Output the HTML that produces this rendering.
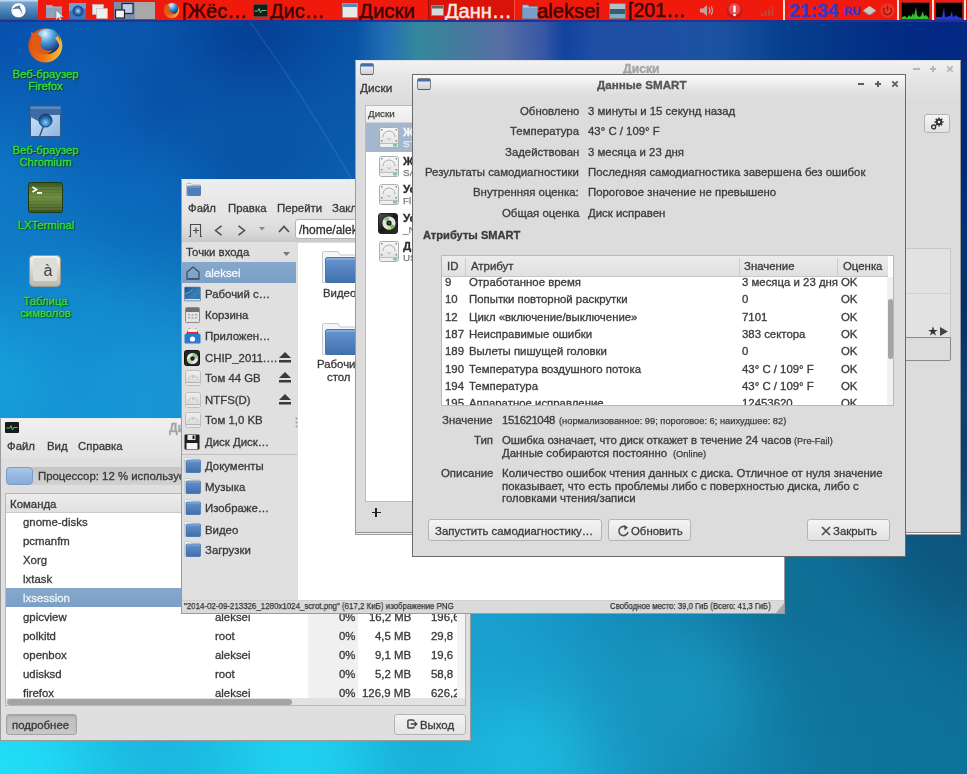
<!DOCTYPE html>
<html><head><meta charset="utf-8">
<style>
*{box-sizing:border-box;margin:0;padding:0}
html,body{width:967px;height:774px;overflow:hidden}
body{position:relative;font-family:"Liberation Sans",sans-serif;font-size:11.4px;color:#3c3c3c;background:#1080c8}
.a{position:absolute}
.w{position:absolute;background:#dcdcdc;overflow:hidden}
.bd{position:absolute;left:0;top:0;right:0;bottom:0;border:1px solid #7a7a7a;pointer-events:none}
.t{position:absolute;white-space:pre;line-height:11.4px;font-size:11.4px;-webkit-text-stroke:0.32px currentColor;will-change:transform}
.s{position:absolute;white-space:pre;line-height:9.3px;font-size:9.3px;-webkit-text-stroke:0.25px currentColor;will-change:transform}
.r{text-align:right}
.b{font-weight:bold}
.btn{position:absolute;border:1px solid #b4b4b4;border-radius:3px;background:linear-gradient(#f4f4f4,#e2e2e2)}
</style></head><body>

<div class="a" style="left:0;top:0;width:967px;height:774px;overflow:hidden"><div class="a" style="left:-60px;top:-60px;width:1087px;height:894px;filter:blur(14px)">
<i style="position:absolute;left:0;top:-4px;width:1087px;height:32px;background:linear-gradient(90deg,#0a5eb3 -20px,#0a5ab1 20px,#0958b0 60px,#0959b0 100px,#095aaf 140px,#0959ad 180px,#0956a9 220px,#0851a5 260px,#074da1 300px,#074da0 340px,#0850a3 380px,#0953a5 420px,#0955a5 460px,#0a54a4 500px,#0a50a2 540px,#0a4b9f 580px,#0a469c 620px,#0a439b 660px,#0a449a 700px,#094599 740px,#094597 780px,#084394 820px,#073f90 860px,#053a8c 900px,#043488 940px,#033086 980px,#033086 1020px,#043286 1060px,#043687 1100px)"></i>
<i style="position:absolute;left:0;top:28px;width:1087px;height:32px;background:linear-gradient(90deg,#0a5db3 -20px,#0957b1 20px,#0854af 60px,#0956b0 100px,#0959af 140px,#0958ad 180px,#0854a9 220px,#074da1 260px,#05469b 300px,#06479c 340px,#074da0 380px,#0852a4 420px,#0954a5 460px,#0a53a4 500px,#0a4fa2 540px,#0a489e 580px,#0a419b 620px,#0a3e99 660px,#0a4099 700px,#094399 740px,#094497 780px,#084293 820px,#073e8e 860px,#05378a 900px,#033086 940px,#022b84 980px,#022b84 1020px,#032f85 1060px,#043386 1100px)"></i>
<i style="position:absolute;left:0;top:60px;width:1087px;height:32px;background:linear-gradient(90deg,#0a5cb3 -20px,#0955b0 20px,#0850ae 60px,#0854af 100px,#0959b0 140px,#0958ae 180px,#0854a9 220px,#064a9f 260px,#043f95 300px,#054298 340px,#074c9f 380px,#0852a4 420px,#0955a6 460px,#0a53a5 500px,#0a4ea1 540px,#0a469d 580px,#0a3e99 620px,#0a3a98 660px,#0a3d98 700px,#0a4198 740px,#094496 780px,#084292 820px,#063d8d 860px,#053588 900px,#032e85 940px,#022884 980px,#022884 1020px,#032d84 1060px,#043284 1100px)"></i>
<i style="position:absolute;left:0;top:92px;width:1087px;height:32px;background:linear-gradient(90deg,#0a5eb4 -20px,#0957b1 20px,#0851ae 60px,#0855b0 100px,#095ab1 140px,#0958ae 180px,#0854aa 220px,#074da2 260px,#044096 300px,#054499 340px,#074da1 380px,#0853a5 420px,#0956a6 460px,#0a54a5 500px,#0a4fa2 540px,#0a469d 580px,#0a3d99 620px,#0a3a98 660px,#0a3c98 700px,#0a4198 740px,#094496 780px,#084292 820px,#063d8c 860px,#053588 900px,#032e84 940px,#022983 980px,#022983 1020px,#032d83 1060px,#043183 1100px)"></i>
<i style="position:absolute;left:0;top:124px;width:1087px;height:32px;background:linear-gradient(90deg,#0b63b7 -20px,#0a5eb4 20px,#095ab2 60px,#0a5cb3 100px,#0a5db3 140px,#0958af 180px,#0851a9 220px,#0852a7 260px,#074ca1 300px,#074da1 340px,#0852a4 380px,#0956a7 420px,#0a58a8 460px,#0a56a6 500px,#0a51a3 540px,#0a499e 580px,#0a409a 620px,#0a3d99 660px,#0a3f99 700px,#0a4398 740px,#094596 780px,#084391 820px,#073e8c 860px,#053787 900px,#033083 940px,#022c82 980px,#022b80 1020px,#032d80 1060px,#043181 1100px)"></i>
<i style="position:absolute;left:0;top:156px;width:1087px;height:32px;background:linear-gradient(90deg,#0c69bb -20px,#0c67ba 20px,#0b65b9 60px,#0b62b7 100px,#0a5eb5 140px,#095bb2 180px,#0851a8 220px,#0855aa 260px,#0854a7 300px,#0854a7 340px,#0956a8 380px,#0958a9 420px,#0a5aa9 460px,#0b59a8 500px,#0b55a5 540px,#0b4ea1 580px,#0a479d 620px,#0a439b 660px,#0a449a 700px,#0a4799 740px,#094795 780px,#084491 820px,#073f8b 860px,#053886 900px,#043181 940px,#032c7d 980px,#022a7a 1020px,#032c7c 1060px,#04317e 1100px)"></i>
<i style="position:absolute;left:0;top:188px;width:1087px;height:32px;background:linear-gradient(90deg,#0d6fbe -20px,#0d6fbf 20px,#0d6fbf 60px,#0c69bb 100px,#0a60b6 140px,#0a5fb5 180px,#095bb0 220px,#0959ac 260px,#0853a7 300px,#0854a7 340px,#0958aa 380px,#0a5bab 420px,#0b5dab 460px,#0b5caa 500px,#0b59a7 540px,#0b53a3 580px,#0b4ea0 620px,#0b4b9d 660px,#0a4a9b 700px,#0a4b99 740px,#094a95 780px,#084690 820px,#07418a 860px,#063a85 900px,#04327f 940px,#022b7a 980px,#022878 1020px,#022b79 1060px,#04317d 1100px)"></i>
<i style="position:absolute;left:0;top:220px;width:1087px;height:32px;background:linear-gradient(90deg,#0e73c1 -20px,#0f75c3 20px,#0f77c6 60px,#0e71c1 100px,#0b67ba 140px,#0a66b9 180px,#0a66b8 220px,#095db0 260px,#0853a7 300px,#0855a8 340px,#0a5bac 380px,#0b5ead 420px,#0b60ad 460px,#0c5fac 500px,#0c5da9 540px,#0c59a6 580px,#0b55a2 620px,#0b529f 660px,#0b509d 700px,#0a4f99 740px,#0a4d95 780px,#094890 820px,#08438a 860px,#063c84 900px,#05347e 940px,#032d7a 980px,#022978 1020px,#032c79 1060px,#04327c 1100px)"></i>
<i style="position:absolute;left:0;top:252px;width:1087px;height:32px;background:linear-gradient(90deg,#0f77c3 -20px,#0f78c5 20px,#0f79c7 60px,#0f76c4 100px,#0c6ebe 140px,#0a6abb 180px,#0a69bb 220px,#0a64b5 260px,#095cae 300px,#0a5cad 340px,#0b5faf 380px,#0b62b0 420px,#0c63af 460px,#0c63ae 500px,#0c61ab 540px,#0c5ea8 580px,#0c5ba5 620px,#0c58a1 660px,#0b559e 700px,#0b539a 740px,#0a5095 780px,#094b90 820px,#084589 860px,#073e83 900px,#05387e 940px,#04327a 980px,#042f78 1020px,#043179 1060px,#05357b 1100px)"></i>
<i style="position:absolute;left:0;top:284px;width:1087px;height:32px;background:linear-gradient(90deg,#107bc5 -20px,#107ac6 20px,#0f7ac6 60px,#0f79c5 100px,#0e76c2 140px,#0c70be 180px,#0c6dbc 220px,#0c6bb9 260px,#0c67b5 300px,#0c65b3 340px,#0c66b3 380px,#0c67b3 420px,#0d67b2 460px,#0d67b0 500px,#0d65ad 540px,#0d63aa 580px,#0d60a7 620px,#0c5da3 660px,#0c5a9f 700px,#0b579b 740px,#0b5396 780px,#0a4e90 820px,#094889 860px,#084182 900px,#063a7c 940px,#063576 980px,#053373 1020px,#053475 1060px,#063778 1100px)"></i>
<i style="position:absolute;left:0;top:316px;width:1087px;height:32px;background:linear-gradient(90deg,#117fc8 -20px,#1180c9 20px,#1180c9 60px,#1181c9 100px,#1081c9 140px,#0f7cc6 180px,#0f78c2 220px,#0f74bf 260px,#0e70bc 300px,#0e6db9 340px,#0d6cb7 380px,#0e6cb6 420px,#0e6cb4 460px,#0e6bb2 500px,#0e69af 540px,#0e67ac 580px,#0d65a8 620px,#0d62a5 660px,#0d5ea0 700px,#0c5b9c 740px,#0b5696 780px,#0a5190 820px,#094a89 860px,#084382 900px,#073c79 940px,#063571 980px,#06316c 1020px,#063470 1060px,#073976 1100px)"></i>
<i style="position:absolute;left:0;top:348px;width:1087px;height:32px;background:linear-gradient(90deg,#1285cb -20px,#1288cd 20px,#138ace 60px,#128ace 100px,#128cd0 140px,#1288cd 180px,#1384ca 220px,#127fc6 260px,#107ac2 300px,#0f75be 340px,#0f73bb 380px,#0f71b9 420px,#0f70b6 460px,#0f6fb4 500px,#0f6eb1 540px,#0e6cae 580px,#0e69aa 620px,#0e66a6 660px,#0d62a2 700px,#0d5e9d 740px,#0c5a97 780px,#0b5491 820px,#0a4e8a 860px,#094682 900px,#083d79 940px,#06346f 980px,#06306a 1020px,#06336e 1060px,#073a75 1100px)"></i>
<i style="position:absolute;left:0;top:380px;width:1087px;height:32px;background:linear-gradient(90deg,#138bce -20px,#1491d2 20px,#1595d5 60px,#1390d2 100px,#128ed1 140px,#148ed1 180px,#168ed1 220px,#1589cc 260px,#1382c7 300px,#117cc2 340px,#1079be 380px,#1076bb 420px,#1075b9 460px,#1074b6 500px,#1072b3 540px,#0f70b0 580px,#0f6dac 620px,#0f6aa8 660px,#0e66a3 700px,#0d629e 740px,#0d5d98 780px,#0c5892 820px,#0b518b 860px,#0a4a83 900px,#08417a 940px,#073972 980px,#06346d 1020px,#073771 1060px,#083d76 1100px)"></i>
<i style="position:absolute;left:0;top:412px;width:1087px;height:32px;background:linear-gradient(90deg,#1490d1 -20px,#1698d7 20px,#179fdb 60px,#1596d5 100px,#1491d3 140px,#1794d5 180px,#1a95d5 220px,#178fd0 260px,#1487ca 300px,#1281c5 340px,#117dc1 380px,#117bbe 420px,#1179bb 460px,#1178b8 500px,#1076b5 540px,#1074b2 580px,#1072ae 620px,#0f6eaa 660px,#0f6aa5 700px,#0e669f 740px,#0d6199 780px,#0c5c93 820px,#0b558c 860px,#0a4e84 900px,#09477d 940px,#094077 980px,#083d74 1020px,#083f75 1060px,#094279 1100px)"></i>
<i style="position:absolute;left:0;top:444px;width:1087px;height:32px;background:linear-gradient(90deg,#1591d2 -20px,#1698d7 20px,#179eda 60px,#1697d6 100px,#1594d5 140px,#1698d7 180px,#1995d5 220px,#1790d1 260px,#158acc 300px,#1385c7 340px,#1281c3 380px,#127fc0 420px,#127ebd 460px,#127dbb 500px,#117bb8 540px,#1179b4 580px,#1176b0 620px,#1073ab 660px,#0f6fa6 700px,#0f6aa1 740px,#0e659b 780px,#0d6094 820px,#0c598e 860px,#0b5286 900px,#0a4b7e 940px,#0a4578 980px,#094274 1020px,#094376 1060px,#0a467a 1100px)"></i>
<i style="position:absolute;left:0;top:476px;width:1087px;height:32px;background:linear-gradient(90deg,#1591d1 -20px,#1596d5 20px,#1698d6 60px,#1595d4 100px,#1694d4 140px,#1696d5 180px,#1794d4 220px,#1690d1 260px,#158bcc 300px,#1488c8 340px,#1385c5 380px,#1384c2 420px,#1383bf 460px,#1382bd 500px,#1280ba 540px,#127eb7 580px,#127bb3 620px,#1177ae 660px,#1073a8 700px,#0f6ea2 740px,#0f699c 780px,#0e6496 820px,#0d5e8f 860px,#0c5688 900px,#0b4e7f 940px,#0a4576 980px,#0a4071 1020px,#0a4374 1060px,#0a487a 1100px)"></i>
<i style="position:absolute;left:0;top:508px;width:1087px;height:32px;background:linear-gradient(90deg,#1491d0 -20px,#1593d2 20px,#1594d3 60px,#1593d3 100px,#1593d3 140px,#1693d3 180px,#1692d2 220px,#168fcf 260px,#158dcc 300px,#148ac9 340px,#1489c6 380px,#1488c4 420px,#1488c2 460px,#1487c0 500px,#1486be 540px,#1384ba 580px,#1380b5 620px,#127cb0 660px,#1177aa 700px,#1072a4 740px,#0f6d9e 780px,#0f6898 820px,#0e6292 860px,#0d5b8a 900px,#0c5281 940px,#0a4777 980px,#0a4070 1020px,#0a4575 1060px,#0b4b7b 1100px)"></i>
<i style="position:absolute;left:0;top:540px;width:1087px;height:32px;background:linear-gradient(90deg,#1591d0 -20px,#1592d1 20px,#1593d2 60px,#1593d2 100px,#1592d2 140px,#1592d1 180px,#1691d0 220px,#1590cf 260px,#158ecc 300px,#158dca 340px,#148cc8 380px,#158dc6 420px,#158dc5 460px,#158dc3 500px,#158cc1 540px,#158abe 580px,#1485b9 620px,#1380b3 660px,#127bac 700px,#1176a6 740px,#10719f 780px,#0f6c99 820px,#0e6794 860px,#0e608d 900px,#0d5885 940px,#0c507d 980px,#0b4b79 1020px,#0b4c7a 1060px,#0c507e 1100px)"></i>
<i style="position:absolute;left:0;top:572px;width:1087px;height:32px;background:linear-gradient(90deg,#1593d0 -20px,#1594d1 20px,#1594d1 60px,#1594d1 100px,#1593d1 140px,#1593d1 180px,#1592d0 220px,#1591ce 260px,#1591cd 300px,#1591cb 340px,#1591c9 380px,#1691c8 420px,#1693c7 460px,#1694c7 500px,#1793c6 540px,#1690c2 580px,#158bbc 620px,#1485b6 660px,#137fae 700px,#1279a7 740px,#1174a0 780px,#106f9a 820px,#0f6c96 860px,#0e6691 900px,#0d5d89 940px,#0d5681 980px,#0d557e 1020px,#0d547f 1060px,#0c5481 1100px)"></i>
<i style="position:absolute;left:0;top:604px;width:1087px;height:32px;background:linear-gradient(90deg,#1596d1 -20px,#1697d2 20px,#1697d2 60px,#1697d2 100px,#1696d2 140px,#1695d1 180px,#1695d0 220px,#1695cf 260px,#1695ce 300px,#1696cd 340px,#1696cc 380px,#1796cb 420px,#1798ca 460px,#189acb 500px,#189acb 540px,#1796c7 580px,#1690c0 620px,#1589b8 660px,#1383b1 700px,#127daa 740px,#1177a1 780px,#10719a 820px,#0f6f96 860px,#0f6b94 900px,#0e628c 940px,#0d5881 980px,#0d567e 1020px,#0d5781 1060px,#0d5884 1100px)"></i>
<i style="position:absolute;left:0;top:636px;width:1087px;height:32px;background:linear-gradient(90deg,#169cd4 -20px,#179ed5 20px,#179ed5 60px,#179dd4 100px,#179bd3 140px,#169ad2 180px,#1699d2 220px,#179ad1 260px,#179bd1 300px,#179cd0 340px,#179ccf 380px,#179bcd 420px,#189ccd 460px,#199ece 500px,#199ece 540px,#189bcb 580px,#1794c3 620px,#158dbb 660px,#1487b4 700px,#1382ad 740px,#127aa4 780px,#10729a 820px,#107096 860px,#0f6e96 900px,#0e6890 940px,#0e5e87 980px,#0e5982 1020px,#0d5a84 1060px,#0d5c87 1100px)"></i>
<i style="position:absolute;left:0;top:668px;width:1087px;height:32px;background:linear-gradient(90deg,#18a4d8 -20px,#18a7d9 20px,#18a8da 60px,#18a6d9 100px,#18a3d7 140px,#17a0d5 180px,#179fd4 220px,#18a0d4 260px,#18a2d4 300px,#18a4d4 340px,#18a3d3 380px,#18a1d0 420px,#199fcf 460px,#199fcf 500px,#199fcf 540px,#199dcd 580px,#1797c6 620px,#1691be 660px,#158cb8 700px,#1589b4 740px,#1381ab 780px,#10759d 820px,#107097 860px,#0f7097 900px,#0f6d95 940px,#0e668f 980px,#0e618a 1020px,#0e608a 1060px,#0d608b 1100px)"></i>
<i style="position:absolute;left:0;top:700px;width:1087px;height:32px;background:linear-gradient(90deg,#19aedd -20px,#1ab4e0 20px,#1bb6e1 60px,#1ab3df 100px,#19addc 140px,#19a8d9 180px,#18a6d7 220px,#19a8d8 260px,#19acda 300px,#1aafdb 340px,#1aaed9 380px,#19a8d5 420px,#19a2d1 460px,#19a0cf 500px,#19a0cf 540px,#199fcd 580px,#189bc8 620px,#1794c0 660px,#1691bb 700px,#1791bb 740px,#158bb5 780px,#127ba4 820px,#10749b 860px,#0f7399 900px,#0f7198 940px,#0e6d95 980px,#0e6992 1020px,#0e6790 1060px,#0e6590 1100px)"></i>
<i style="position:absolute;left:0;top:732px;width:1087px;height:32px;background:linear-gradient(90deg,#1bb9e2 -20px,#1dc2e7 20px,#1dc6ea 60px,#1dc2e7 100px,#1bb9e2 140px,#1ab0dd 180px,#19addb 220px,#1ab0dc 260px,#1bb7e0 300px,#1cbde3 340px,#1cbbe2 380px,#1bb2db 420px,#1aa8d4 460px,#1aa4d1 500px,#1aa5d1 540px,#1aa6d1 580px,#19a2cc 620px,#1798c3 660px,#1793bd 700px,#1795be 740px,#1791ba 780px,#1381a9 820px,#10769d 860px,#0f7399 900px,#0f7399 940px,#0e7198 980px,#0e6f96 1020px,#0e6c94 1060px,#0e6993 1100px)"></i>
<i style="position:absolute;left:0;top:764px;width:1087px;height:32px;background:linear-gradient(90deg,#1dc4e8 -20px,#1fd0ef 20px,#20d6f2 60px,#1fd1ef 100px,#1dc4e8 140px,#1bb8e1 180px,#1ab3de 220px,#1bb7e0 260px,#1dc1e6 300px,#1ecbec 340px,#1ecaeb 380px,#1cbce2 420px,#1baed8 460px,#1aaad5 500px,#1baed7 540px,#1cb3da 580px,#1bacd4 620px,#189dc7 660px,#1794be 700px,#1793bd 740px,#168fb9 780px,#1382ab 820px,#10789f 860px,#0f749a 900px,#0e7399 940px,#0e7398 980px,#0e7298 1020px,#0e6f97 1060px,#0e6c96 1100px)"></i>
<i style="position:absolute;left:0;top:796px;width:1087px;height:32px;background:linear-gradient(90deg,#1ecaeb -20px,#20d8f3 20px,#21def7 60px,#21daf4 100px,#1ecbec 140px,#1cbde3 180px,#1bb7e0 220px,#1cbbe2 260px,#1ec7e9 300px,#1fd2f0 340px,#1fd1f0 380px,#1dc3e6 420px,#1bb3db 460px,#1baed7 500px,#1cb5db 540px,#1dbadf 580px,#1cb3d9 620px,#19a1cb 660px,#1795bf 700px,#1690ba 740px,#158bb5 780px,#1382ab 820px,#1179a1 860px,#0f759c 900px,#0e739a 940px,#0e7399 980px,#0e7399 1020px,#0e7198 1060px,#0e6e97 1100px)"></i>
<i style="position:absolute;left:0;top:828px;width:1087px;height:32px;background:linear-gradient(90deg,#1eccec -20px,#20d9f4 20px,#21dff7 60px,#21dbf5 100px,#1ecded 140px,#1cbfe4 180px,#1bb9e0 220px,#1cbce2 260px,#1dc6e9 300px,#1fd0ef 340px,#1fcfef 380px,#1dc3e6 420px,#1bb4db 460px,#1bafd8 500px,#1cb4db 540px,#1db8de 580px,#1cb2d8 620px,#19a3cc 660px,#1796c0 700px,#158eb9 740px,#1488b2 780px,#1281ab 820px,#117aa3 860px,#10769e 900px,#0f749b 940px,#0e7399 980px,#0e7399 1020px,#0e7199 1060px,#0e6f99 1100px)"></i>
<i style="position:absolute;left:0;top:860px;width:1087px;height:32px;background:linear-gradient(90deg,#1ec9eb -20px,#20d4f1 20px,#20d9f4 60px,#20d5f2 100px,#1ecaeb 140px,#1cbee4 180px,#1bb8e0 220px,#1cbae1 260px,#1dc1e6 300px,#1ec8ea 340px,#1ec7e9 380px,#1cbde2 420px,#1bb2da 460px,#1baed6 500px,#1bb0d8 540px,#1cb1d8 580px,#1bacd4 620px,#19a0ca 660px,#1795c0 700px,#158eb8 740px,#1487b2 780px,#1281ab 820px,#117ba5 860px,#1077a0 900px,#0f759d 940px,#0e739b 980px,#0e739a 1020px,#0e719a 1060px,#0e709a 1100px)"></i>
<i style="position:absolute;left:0;top:892px;width:1087px;height:32px;background:linear-gradient(90deg,#1dc4e7 -20px,#1eccec 20px,#1fd0ee 60px,#1ecdec 100px,#1dc4e7 140px,#1cbbe2 180px,#1bb6df 220px,#1bb7df 260px,#1cbbe1 300px,#1cbfe3 340px,#1cbde2 380px,#1bb7dd 420px,#1aafd8 460px,#1aabd4 500px,#1aabd4 540px,#1aaad3 580px,#19a5ce 620px,#189dc7 660px,#1694bf 700px,#158db8 740px,#1487b1 780px,#1281ac 820px,#117ca6 860px,#1078a2 900px,#0f769f 940px,#0f749d 980px,#0f739c 1020px,#0f729b 1060px,#0f709b 1100px)"></i>
</div></div>
<div class="a" style="left:355px;top:20px;width:210px;height:42px;background:linear-gradient(90deg,rgba(60,120,190,0) 0%,rgba(70,140,200,0.45) 15%,rgba(80,170,150,0.6) 30%,rgba(110,160,150,0.55) 45%,rgba(150,140,170,0.55) 70%,rgba(120,120,180,0.4) 90%,rgba(40,60,150,0) 100%)"></div>
<div class="a" style="left:550px;top:20px;width:230px;height:42px;background:linear-gradient(90deg,rgba(120,160,220,0) 0%,rgba(120,160,220,0.2) 20%,rgba(120,160,220,0.16) 75%,rgba(120,160,220,0) 100%)"></div>
<svg class="a" style="left:0;top:0" width="967" height="774"><path d="M250 22Q300 90 352 180" fill="none" stroke="rgba(160,210,250,0.13)" stroke-width="1.5"/></svg>
<div class="a" style="left:0;top:20px;width:967px;height:2px;background:linear-gradient(#2a2a8a,#1a3a9a)"></div><div class="a" style="left:0;top:0;width:967px;height:20px;overflow:hidden">
<div class="a" style="left:0;top:0;width:967px;height:20px;background:#f01a0c"></div>
<div class="a" style="left:0;top:0;width:38px;height:20px;background:linear-gradient(#b8d8f4 0,#b8d8f4 1px,#7aa6d0 2px,#4a82b8 55%,#2a6498 95%,#5a3a78 100%)"></div>
<svg class="a" style="left:10px;top:2px" width="17" height="17" viewBox="0 0 17 17"><circle cx="8.5" cy="8.2" r="7.6" fill="#fafcff" stroke="#3a5a80" stroke-width="0.6"/><path d="M1.8 7.5Q5 4 9.5 3.2Q11.5 7.5 12.8 12.8Q10.8 8.5 9 6.8Q5 6.3 1.8 7.5Z" fill="#5a7896"/></svg>
<svg class="a" style="left:45px;top:3px" width="19" height="17" viewBox="0 0 19 17"><path d="M1 2h6l1.5 1.5H17V15H1Z" fill="#9ab0c8"/><rect x="1" y="5" width="16" height="10" fill="#8aa2bc"/><path d="M11 7L11 17 13.5 14.5 15.5 18.5 17 17.8 15 14 18.5 14Z" fill="#f0f0f0" stroke="#777" stroke-width="0.6"/></svg>
<svg class="a" style="left:69px;top:3px" width="17" height="16" viewBox="0 0 17 16"><rect x="0" y="0" width="17" height="16" rx="1" fill="#3e78bc"/><path d="M0 0H17V6Q8 3 0 9Z" fill="#6aa0d8"/><circle cx="9" cy="8" r="4.5" fill="none" stroke="#1e4e90" stroke-width="2"/><circle cx="9" cy="8" r="2" fill="#8ab8e8"/></svg>
<svg class="a" style="left:92px;top:4px" width="16" height="15" viewBox="0 0 16 15"><rect x="0.5" y="0.5" width="11" height="10" fill="#e8e8e8" stroke="#bbb" stroke-width="0.6"/><rect x="4.5" y="4.5" width="11" height="10" fill="#f0f0f0" stroke="#bbb" stroke-width="0.6"/></svg>
<div class="a" style="left:114px;top:2px;width:41px;height:17px;background:#a8a8a8"></div>
<svg class="a" style="left:114px;top:2px" width="21" height="17" viewBox="0 0 21 17"><rect x="0" y="0" width="21" height="17" fill="#7a90a8"/><rect x="8" y="1.5" width="11" height="10" fill="#b8d0e8" stroke="#222" stroke-width="1.2"/><rect x="1.5" y="8" width="9" height="8" fill="#f4f4f4" stroke="#222" stroke-width="1.2"/></svg>
<svg class="a" style="left:163px;top:2px" width="17" height="17" viewBox="0 0 37 37"><circle cx="18.3" cy="18.5" r="17" fill="url(#ffo)"/><circle cx="20.5" cy="14.3" r="12.6" fill="url(#ffg)"/><path d="M4 5Q9 6 13 9Q16 11 14 15Q12 19 16 22Q20 25 26 23Q22 28 15 27Q7 25 5 17Z" fill="#e25a14"/></svg>
<div class="a" style="left:182px;top:1px;white-space:pre;font-size:20px;line-height:20px;-webkit-text-stroke:0.45px currentColor;color:#3a0606">[Жёс…</div>
<svg class="a" style="left:253px;top:4px" width="15" height="13" viewBox="0 0 15 13"><rect x="0" y="0" width="15" height="13" fill="#1a1a1a" stroke="#888" stroke-width="0.8"/><path d="M1.5 7H5L6 4.5 7.5 9 8.5 6.5H13.5" fill="none" stroke="#40d080" stroke-width="1"/></svg>
<div class="a" style="left:270px;top:1px;white-space:pre;font-size:20px;line-height:20px;-webkit-text-stroke:0.45px currentColor;color:#3a0606">Дис…</div>
<svg class="a" style="left:342px;top:3px" width="16" height="15" viewBox="0 0 16 15"><rect x="0.5" y="0.5" width="15" height="14" fill="#e8e8e8" stroke="#999" stroke-width="0.8"/><rect x="1" y="1" width="14" height="3" fill="#5a88c0"/></svg>
<div class="a" style="left:359px;top:1px;white-space:pre;font-size:20.5px;line-height:20.5px;-webkit-text-stroke:0.45px currentColor;color:#3a0606">Диски</div>
<div class="a" style="left:428px;top:0;width:87px;height:20px;background:#d81408;border-left:1px solid #a01008;border-right:1px solid #f85040"></div>
<svg class="a" style="left:431px;top:5px" width="13" height="11" viewBox="0 0 13 11"><rect x="0.5" y="0.5" width="12" height="10" fill="#d8d8d8" stroke="#888" stroke-width="0.8"/><rect x="1" y="1" width="11" height="2.5" fill="#666"/></svg>
<div class="a" style="left:445px;top:1px;white-space:pre;font-size:20px;line-height:20px;-webkit-text-stroke:0.45px currentColor;color:#fbe8e4">Данн…</div>
<svg class="a" style="left:522px;top:3px" width="16" height="16" viewBox="0 0 16 16"><path d="M0.5 2H6l1 1.5H15.5V15.5H0.5Z" fill="#b8cce0" stroke="#6a86a8" stroke-width="0.8"/><rect x="1" y="4.5" width="14" height="10.5" fill="#7a9ec8"/></svg>
<div class="a" style="left:537px;top:1px;white-space:pre;font-size:20.2px;line-height:20.2px;-webkit-text-stroke:0.45px currentColor;color:#3a0606">aleksei</div>
<svg class="a" style="left:609px;top:3px" width="17" height="16" viewBox="0 0 17 16"><rect x="0.5" y="0.5" width="16" height="15" fill="#b0c0c8" stroke="#777" stroke-width="0.8"/><rect x="1" y="6" width="15" height="5" fill="#3a5a70"/><rect x="1" y="11" width="15" height="4" fill="#7ab0c8"/></svg>
<div class="a" style="left:628px;top:1px;white-space:pre;font-size:19.6px;line-height:19.6px;-webkit-text-stroke:0.45px currentColor;color:#3a0606">[201…</div>
<svg class="a" style="left:699px;top:4px" width="16" height="13" viewBox="0 0 16 13"><path d="M1 4.5H4L8 1V12L4 8.5H1Z" fill="#c8a0a0"/><path d="M10 3.5Q12 6.5 10 9.5M12 2Q15 6.5 12 11" fill="none" stroke="#c8a0a0" stroke-width="1.2"/></svg>
<svg class="a" style="left:726px;top:2px" width="17" height="17" viewBox="0 0 17 17"><circle cx="8.5" cy="8.5" r="8" fill="#c81818"/><circle cx="8.5" cy="7" r="6" fill="#e84848"/><rect x="7.3" y="3.5" width="2.4" height="7" rx="1" fill="#fff"/><circle cx="8.5" cy="13" r="1.3" fill="#fff"/></svg>
<svg class="a" style="left:760px;top:6px" width="14" height="10" viewBox="0 0 14 10"><g fill="#b84a3a"><rect x="1" y="7" width="2" height="3"/><rect x="4.5" y="5" width="2" height="5"/><rect x="8" y="3" width="2" height="7"/><rect x="11.5" y="1" width="2" height="9"/></g></svg>
<div class="a" style="left:783px;top:0;width:2px;height:20px;background:#f6e0dc"></div>
<div class="a" style="left:789px;top:1px;white-space:pre;font-size:19px;line-height:19px;-webkit-text-stroke:0.45px currentColor;color:#3838c8;font-weight:bold;letter-spacing:0.2px">21:34</div>
<div class="a" style="left:844px;top:6px;white-space:pre;font-size:11.4px;line-height:11.4px;-webkit-text-stroke:0.45px currentColor;color:#3838c8;font-weight:bold">RU</div>
<svg class="a" style="left:863px;top:6px" width="13" height="9" viewBox="0 0 13 9"><path d="M0 4.5L6.5 0 13 4.5 6.5 9Z" fill="#c8c8c8"/><path d="M0 4.5L6.5 9 13 4.5 13 5.5 6.5 10 0 5.5Z" fill="#888"/></svg>
<svg class="a" style="left:880px;top:3px" width="15" height="15" viewBox="0 0 15 15"><circle cx="7.5" cy="7.5" r="7" fill="#e83a2a"/><path d="M4.8 4.8A4 4 0 1 0 10.2 4.8" fill="none" stroke="#a81008" stroke-width="1.4"/><path d="M7.5 2.5V7.5" stroke="#a81008" stroke-width="1.4"/></svg>
<div class="a" style="left:897px;top:0;width:2px;height:20px;background:#f6e0dc"></div>
<div class="a" style="left:901px;top:2px;width:29px;height:18px;background:#000;border:1px solid #8a2020"></div>
<svg class="a" style="left:902px;top:3px" width="27" height="16" viewBox="0 0 27 16"><path d="M0 16V14L3 13 5 15 7 12 9 14 11 10 12 13 14 4 15 12 17 14 19 13 21 8 22 13 24 12 26 14 27 16Z" fill="#30c030"/></svg>
<div class="a" style="left:932px;top:0;width:2px;height:20px;background:#f6e0dc"></div>
<div class="a" style="left:935px;top:2px;width:28px;height:18px;background:#000;border:1px solid #8a2020"></div>
<svg class="a" style="left:936px;top:3px" width="26" height="16" viewBox="0 0 26 16"><path d="M0 16V14L6 14 8 4 9 14 14 13 16 8 17 14 20 12 22 14 26 15 26 16Z" fill="#2838d8"/></svg>
<div class="a" style="left:964px;top:0;width:2px;height:20px;background:#f6e0dc"></div>
</div>
<svg class="a" style="left:27px;top:27px" width="37" height="37" viewBox="0 0 37 37"><defs><radialGradient id="ffg" cx="0.4" cy="0.2" r="0.8"><stop offset="0" stop-color="#d8f8ff"/><stop offset="0.45" stop-color="#4a9ad8"/><stop offset="1" stop-color="#0a2a78"/></radialGradient><linearGradient id="ffo" x1="0" y1="0.3" x2="1" y2="0.6"><stop offset="0" stop-color="#d84a10"/><stop offset="0.6" stop-color="#f07818"/><stop offset="1" stop-color="#f8c030"/></linearGradient></defs><circle cx="18.3" cy="18.5" r="17" fill="url(#ffo)"/><circle cx="20.5" cy="14.3" r="12.6" fill="url(#ffg)"/><path d="M4 5Q9 6 13 9Q16 11 14 15Q12 19 16 22Q20 25 26 23Q22 28 15 27Q7 25 5 17Z" fill="#e25a14"/><path d="M31 9Q34 14 33 20Q31 14 28 11Z" fill="#f8b828"/></svg>
<div class="a" style="left:-4.5px;width:100px;text-align:center;top:69px;white-space:pre;font-size:11.3px;line-height:11.3px;color:#38de3a;-webkit-text-stroke:0.35px currentColor;text-shadow:1px 1px 1px #10301a,0 0 2px #1a3a2a">Веб-браузер</div>
<div class="a" style="left:-4.5px;width:100px;text-align:center;top:81px;white-space:pre;font-size:11.3px;line-height:11.3px;color:#38de3a;-webkit-text-stroke:0.35px currentColor;text-shadow:1px 1px 1px #10301a,0 0 2px #1a3a2a">Firefox</div>
<svg class="a" style="left:30px;top:106px" width="31" height="31" viewBox="0 0 31 31"><defs><linearGradient id="chl" x1="0" y1="0" x2="1" y2="1"><stop offset="0" stop-color="#d4e8fa"/><stop offset="1" stop-color="#8ab6e2"/></linearGradient><radialGradient id="chb" cx="0.5" cy="0.65" r="0.6"><stop offset="0" stop-color="#7ad4ff"/><stop offset="0.55" stop-color="#2a78b8"/><stop offset="1" stop-color="#1a3a70"/></radialGradient></defs><rect x="0.5" y="0.5" width="30" height="30" rx="1" fill="url(#chl)" stroke="#3a5a88"/><path d="M0.5 0.5H30.5V9H16L12 17 0.5 11Z" fill="#3c6ca8"/><path d="M0.5 0.5H30.5V3H0.5Z" fill="#5a88c0"/><path d="M14 19L9.5 30.5" stroke="#2a4a78" stroke-width="1.3"/><circle cx="15.5" cy="14.5" r="6.6" fill="url(#chb)" stroke="#1a3a68" stroke-width="0.8"/></svg>
<div class="a" style="left:-4.5px;width:100px;text-align:center;top:145px;white-space:pre;font-size:11.3px;line-height:11.3px;color:#38de3a;-webkit-text-stroke:0.35px currentColor;text-shadow:1px 1px 1px #10301a,0 0 2px #1a3a2a">Веб-браузер</div>
<div class="a" style="left:-4.5px;width:100px;text-align:center;top:156.5px;white-space:pre;font-size:11.3px;line-height:11.3px;color:#38de3a;-webkit-text-stroke:0.35px currentColor;text-shadow:1px 1px 1px #10301a,0 0 2px #1a3a2a">Chromium</div>
<svg class="a" style="left:28px;top:182px" width="35" height="31" viewBox="0 0 35 31"><defs><linearGradient id="ltg" x1="0" y1="0" x2="0" y2="1"><stop offset="0" stop-color="#3a5a20"/><stop offset="0.5" stop-color="#6a8a3a"/><stop offset="1" stop-color="#3a5020"/></linearGradient></defs><rect x="0.5" y="0.5" width="34" height="30" rx="2" fill="url(#ltg)" stroke="#223a12"/><g stroke="#8aa060" stroke-width="0.8" opacity="0.6"><path d="M1 6H34M1 9H34M1 12H34M1 15H34M1 18H34M1 21H34M1 24H34M1 27H34"/></g><path d="M4.5 5L8.5 7.5 4.5 10" fill="none" stroke="#fff" stroke-width="1.6"/><rect x="9" y="10" width="5" height="1.8" fill="#fff"/></svg>
<div class="a" style="left:-4px;width:100px;text-align:center;top:219.5px;white-space:pre;font-size:11.3px;line-height:11.3px;color:#38de3a;-webkit-text-stroke:0.35px currentColor;text-shadow:1px 1px 1px #10301a,0 0 2px #1a3a2a">LXTerminal</div>
<svg class="a" style="left:29px;top:255px" width="32" height="32" viewBox="0 0 32 32"><defs><linearGradient id="kmg" x1="0" y1="0" x2="0" y2="1"><stop offset="0" stop-color="#f4f4f0"/><stop offset="1" stop-color="#b8b8b0"/></linearGradient></defs><rect x="0.5" y="0.5" width="31" height="31" rx="4" fill="url(#kmg)" stroke="#9a9a90"/><rect x="4" y="3" width="24" height="23" rx="2" fill="#deded8"/><text x="19" y="21" font-family="Liberation Sans" font-size="16" fill="#444" text-anchor="middle">à</text></svg>
<div class="a" style="left:-4.5px;width:100px;text-align:center;top:296px;white-space:pre;font-size:11.3px;line-height:11.3px;color:#38de3a;-webkit-text-stroke:0.35px currentColor;text-shadow:1px 1px 1px #10301a,0 0 2px #1a3a2a">Таблица</div>
<div class="a" style="left:-4.5px;width:100px;text-align:center;top:307.5px;white-space:pre;font-size:11.3px;line-height:11.3px;color:#38de3a;-webkit-text-stroke:0.35px currentColor;text-shadow:1px 1px 1px #10301a,0 0 2px #1a3a2a">символов</div>
<div class="w" id="lxtask" style="left:0px;top:418px;width:471px;height:323px;background:#dfdfdf">
<div class="a" style="left:0px;top:0px;width:471px;height:40px;background:linear-gradient(#f0f0f0,#e2e2e2)"></div>
<svg class="a" style="left:5px;top:4px" width="14" height="11" viewBox="0 0 14 11"><rect x="0" y="0" width="14" height="11" rx="1" fill="#1a1a1a"/><path d="M1.5 6H5L6 3.5 7.5 8 8.5 5.5H12.5" fill="none" stroke="#3ad070" stroke-width="1"/></svg>
<div class="t b" style="left:168.5px;top:4.5px;font-size:12.2px;color:#a4a4a4">Диспетчер задач</div>
<div class="t" style="left:6.5px;top:23px;color:#3a3a3a">Файл</div>
<div class="t" style="left:46.5px;top:23px;color:#3a3a3a">Вид</div>
<div class="t" style="left:78px;top:23px;color:#3a3a3a">Справка</div>
<div class="a" style="left:6px;top:49px;width:200px;height:18px;background:linear-gradient(#c4c4c4,#d2d2d2);border-radius:3px"></div>
<div class="a" style="left:6px;top:49px;width:27px;height:18px;background:linear-gradient(#a8c6e8,#86acd8);border:1px solid #7a9ccc;border-radius:4px"></div>
<div class="t" style="left:38px;top:53px;color:#3a3a3a">Процессор: 12 % используется</div>
<div class="a" style="left:5px;top:75px;width:461px;height:213px;background:#fff;border:1px solid #b8b8b8"></div>
<div class="a" style="left:6px;top:76px;width:459px;height:19px;background:linear-gradient(#ececec,#e0e0e0);border-bottom:1px solid #cacaca"></div>
<div class="t" style="left:10px;top:81px;color:#3a3a3a">Команда</div>
<div class="a" style="left:308px;top:95px;width:50px;height:192px;background:#f0f0f0"></div>
<div class="t" style="left:22.5px;top:99px;color:#3a3a3a">gnome-disks</div>
<div class="t" style="left:22.5px;top:118px;color:#3a3a3a">pcmanfm</div>
<div class="t" style="left:22.5px;top:137px;color:#3a3a3a">Xorg</div>
<div class="t" style="left:22.5px;top:156px;color:#3a3a3a">lxtask</div>
<div class="a" style="left:6px;top:170px;width:459px;height:19px;background:linear-gradient(#86a8cc,#7b9fc6)"></div>
<div class="t" style="left:22.5px;top:175px;color:#eef3f9">lxsession</div>
<div class="t" style="left:22.5px;top:194px;color:#3a3a3a">gpicview</div>
<div class="t" style="left:214.5px;top:194px;color:#3a3a3a">aleksei</div>
<div class="t r" style="right:116px;top:194px;color:#3a3a3a">0%</div>
<div class="t r" style="right:60px;top:194px;color:#3a3a3a">16,2 MB</div>
<div class="a" style="left:431px;top:194px;width:26px;height:13px;overflow:hidden"><div class="t" style="left:0;top:0;color:#3a3a3a">196,6 M</div></div>
<div class="t" style="left:22.5px;top:213px;color:#3a3a3a">polkitd</div>
<div class="t" style="left:214.5px;top:213px;color:#3a3a3a">root</div>
<div class="t r" style="right:116px;top:213px;color:#3a3a3a">0%</div>
<div class="t r" style="right:60px;top:213px;color:#3a3a3a">4,5 MB</div>
<div class="a" style="left:431px;top:213px;width:26px;height:13px;overflow:hidden"><div class="t" style="left:0;top:0;color:#3a3a3a">29,8 M</div></div>
<div class="t" style="left:22.5px;top:232px;color:#3a3a3a">openbox</div>
<div class="t" style="left:214.5px;top:232px;color:#3a3a3a">aleksei</div>
<div class="t r" style="right:116px;top:232px;color:#3a3a3a">0%</div>
<div class="t r" style="right:60px;top:232px;color:#3a3a3a">9,1 MB</div>
<div class="a" style="left:431px;top:232px;width:26px;height:13px;overflow:hidden"><div class="t" style="left:0;top:0;color:#3a3a3a">19,6 M</div></div>
<div class="t" style="left:22.5px;top:251px;color:#3a3a3a">udisksd</div>
<div class="t" style="left:214.5px;top:251px;color:#3a3a3a">root</div>
<div class="t r" style="right:116px;top:251px;color:#3a3a3a">0%</div>
<div class="t r" style="right:60px;top:251px;color:#3a3a3a">5,2 MB</div>
<div class="a" style="left:431px;top:251px;width:26px;height:13px;overflow:hidden"><div class="t" style="left:0;top:0;color:#3a3a3a">58,8 M</div></div>
<div class="t" style="left:22.5px;top:270px;color:#3a3a3a">firefox</div>
<div class="t" style="left:214.5px;top:270px;color:#3a3a3a">aleksei</div>
<div class="t r" style="right:116px;top:270px;color:#3a3a3a">0%</div>
<div class="t r" style="right:60px;top:270px;color:#3a3a3a">126,9 MB</div>
<div class="a" style="left:431px;top:270px;width:26px;height:13px;overflow:hidden"><div class="t" style="left:0;top:0;color:#3a3a3a">626,2 M</div></div>
<div class="a" style="left:457px;top:95px;width:8px;height:192px;background:#f4f4f4"></div>
<div class="a" style="left:6px;top:280px;width:459px;height:7px;background:#e2e2e2"></div>
<div class="a" style="left:7px;top:281px;width:285px;height:6px;background:#a4a4a4;border-radius:3px"></div>
<div class="a" style="left:6px;top:296px;width:71px;height:21px;background:linear-gradient(#bdbdbd,#c8c8c8);border:1px solid #a4a4a4;border-radius:3px;box-shadow:inset 0 1px 2px rgba(0,0,0,0.15)"></div>
<div class="t" style="left:12px;top:302px;color:#3a3a3a">подробнее</div>
<div class="a" style="left:394px;top:296px;width:72px;height:21px;background:linear-gradient(#f4f4f4,#e4e4e4);border:1px solid #b4b4b4;border-radius:3px"></div>
<svg class="a" style="left:407px;top:301px" width="11" height="10" viewBox="0 0 11 10"><path d="M7 2.6V2Q7 0.9 5.9 0.9H2.1Q0.9 0.9 0.9 2.1V7.9Q0.9 9.1 2.1 9.1H5.9Q7 9.1 7 8V7.4" fill="none" stroke="#444" stroke-width="1.5"/><path d="M3.6 5H9.6M7.6 3L9.8 5 7.6 7" fill="none" stroke="#444" stroke-width="1.3"/></svg>
<div class="t" style="left:420px;top:302px;color:#3a3a3a">Выход</div>
<div class="bd" style="border-color:#9a9a9a;border-top-color:#e6eef2"></div>
</div>
<div class="w" id="pcman" style="left:181px;top:179px;width:604px;height:435px;background:#dedede">
<div class="a" style="left:0px;top:0px;width:604px;height:41px;background:linear-gradient(#eeeeee,#e2e2e2)"></div>
<svg class="a" style="left:5px;top:4px" width="15" height="13" viewBox="0 0 15 13"><path d="M0.5 12.5V1.5Q0.5 0.5 1.5 0.5H5L6.5 2H14.5V12.5Z" fill="#eef0f2" stroke="#b8bcc0"/><rect x="1.5" y="3" width="13" height="9.5" rx="1" fill="#4f7ebc" stroke="#3a64a0" stroke-width="0.6"/><path d="M2 4H14" stroke="#9ab8e0" stroke-width="0.8"/></svg>
<div class="t" style="left:6.5px;top:24px;color:#3a3a3a">Файл</div>
<div class="t" style="left:46.5px;top:24px;color:#3a3a3a">Правка</div>
<div class="t" style="left:95.5px;top:24px;color:#3a3a3a">Перейти</div>
<div class="t" style="left:151px;top:24px;color:#3a3a3a">Закладки</div>
<div class="a" style="left:0px;top:40px;width:604px;height:23px;background:linear-gradient(#e4e4e4,#d8d8d8 60%,#c9c9c9)"></div>
<svg class="a" style="left:8px;top:45px" width="14" height="13" viewBox="0 0 14 13"><path d="M1.5 12.5V0.5H11.5V12.5" fill="none" stroke="#4a4a4a" stroke-width="1.1"/><path d="M4 6.5h6M7 3.5v6" stroke="#4a4a4a" stroke-width="1.2"/><path d="M0 12.5h2M11 12.5h2" stroke="#4a4a4a"/></svg>
<svg class="a" style="left:33px;top:46px" width="9" height="11" viewBox="0 0 9 11"><path d="M7.5 0.8L1.5 5.5 7.5 10.2" fill="none" stroke="#4a4a4a" stroke-width="1.5"/></svg>
<svg class="a" style="left:56px;top:46px" width="9" height="11" viewBox="0 0 9 11"><path d="M1.5 0.8L7.5 5.5 1.5 10.2" fill="none" stroke="#4a4a4a" stroke-width="1.5"/></svg>
<svg class="a" style="left:78px;top:48px" width="6" height="4" viewBox="0 0 6 4"><path d="M0 0H6L3 3.5Z" fill="#8a8a8a"/></svg>
<svg class="a" style="left:97px;top:46px" width="12" height="8" viewBox="0 0 12 8"><path d="M1 7L6 1.5 11 7" fill="none" stroke="#4a4a4a" stroke-width="1.6"/></svg>
<div class="a" style="left:114px;top:40px;width:80px;height:20px;background:#fff;border:1px solid #b4b4b4;border-radius:3px"></div>
<div class="t" style="left:118px;top:45px;font-size:12px;line-height:12px;color:#333">/home/aleksei</div>
<div class="a" style="left:0px;top:63px;width:116px;height:358px;background:#e0e0e0"></div>
<div class="t" style="left:4.5px;top:68px;color:#3a3a3a">Точки входа</div>
<svg class="a" style="left:102px;top:73px" width="7" height="4" viewBox="0 0 7 4"><path d="M0 0H7L3.5 4Z" fill="#777"/></svg>
<div class="a" style="left:1px;top:83px;width:114px;height:21px;background:linear-gradient(#86a8cc,#7b9fc6)"></div>
<svg class="a" style="left:5px;top:87px" width="14" height="14" viewBox="0 0 14 14"><path d="M1 13V6L7 1 13 6V13Z" fill="none" stroke="#3c4f66" stroke-width="1.3"/><path d="M1.5 12.8h11" stroke="#3c4f66"/></svg>
<div class="t" style="left:24px;top:89px;color:#f4f8fc">aleksei</div>
<svg class="a" style="left:3px;top:107px" width="17" height="16" viewBox="0 0 17 16"><defs><linearGradient id="dkg" x1="0" y1="0" x2="1" y2="1"><stop offset="0" stop-color="#1a5088"/><stop offset="0.6" stop-color="#3a80b8"/><stop offset="1" stop-color="#2a6aa0"/></linearGradient></defs><rect x="0.5" y="1" width="16" height="14" rx="1" fill="url(#dkg)" stroke="#6a8aa8" stroke-width="0.6"/><path d="M1 8Q6 7 9 3" stroke="#7ab0d8" stroke-width="0.8" fill="none"/><rect x="1" y="13" width="15" height="1.5" fill="#d8e4f0"/></svg>
<div class="t" style="left:24px;top:110px;color:#3a3a3a">Рабочий с…</div>
<svg class="a" style="left:4px;top:128px" width="15" height="16" viewBox="0 0 15 16"><rect x="0.5" y="0.5" width="14" height="15" rx="1" fill="#e4e4e4" stroke="#8a8a8a"/><rect x="1" y="1" width="13" height="4" fill="#707070"/><g fill="#aaa"><rect x="3" y="7" width="2" height="1.5"/><rect x="6.5" y="7" width="2" height="1.5"/><rect x="10" y="7" width="2" height="1.5"/><rect x="3" y="10" width="2" height="1.5"/><rect x="6.5" y="10" width="2" height="1.5"/><rect x="10" y="10" width="2" height="1.5"/></g></svg>
<div class="t" style="left:24px;top:131px;color:#3a3a3a">Корзина</div>
<svg class="a" style="left:3px;top:148px" width="17" height="17" viewBox="0 0 17 17"><rect x="0.5" y="7" width="16" height="9.5" rx="1" fill="#2a7ad0"/><circle cx="8.5" cy="12" r="2.6" fill="#fff"/><path d="M2 7L5 1 9 5 12 1 15 7Z" fill="#d83030"/><rect x="4" y="2" width="9" height="3" fill="#f0f0f0"/></svg>
<div class="t" style="left:24px;top:152px;color:#3a3a3a">Приложен…</div>
<svg class="a" style="left:3px;top:171px" width="16" height="16" viewBox="0 0 16 16"><rect x="0.5" y="0.5" width="15" height="15" rx="2" fill="#262626" stroke="#111"/><circle cx="8.5" cy="8.5" r="5.6" fill="#e8ece4"/><path d="M8.5 2.9A5.6 5.6 0 0 1 14.1 8.5H8.5Z" fill="#8ad08a"/><path d="M8.5 14.1A5.6 5.6 0 0 1 2.9 8.5H8.5Z" fill="#b8dca0"/><circle cx="8.5" cy="8.5" r="2.2" fill="#222"/></svg>
<div class="t" style="left:24px;top:174px;color:#3a3a3a">CHIP_2011.…</div>
<svg class="a" style="left:3.5px;top:191px" width="16" height="16" viewBox="0 0 16 16"><defs><linearGradient id="hsg" x1="0" y1="0" x2="0" y2="1"><stop offset="0" stop-color="#f0f0f0"/><stop offset="1" stop-color="#d6d6d6"/></linearGradient></defs><rect x="0.5" y="0.5" width="15" height="15" rx="2" fill="url(#hsg)" stroke="#bdbdbd"/><path d="M3.5 10A4.5 4.5 0 1 1 12.5 10" fill="none" stroke="#c4c4c4"/><circle cx="8" cy="7" r="0.9" fill="#bbb"/><path d="M1 12.5h14" stroke="#b4b4b4"/><rect x="1" y="13" width="14" height="2" fill="#e8e8e8"/></svg>
<div class="t" style="left:24px;top:194px;color:#3a3a3a">Том 44 GB</div>
<svg class="a" style="left:3.5px;top:213px" width="16" height="16" viewBox="0 0 16 16"><defs><linearGradient id="hsg" x1="0" y1="0" x2="0" y2="1"><stop offset="0" stop-color="#f0f0f0"/><stop offset="1" stop-color="#d6d6d6"/></linearGradient></defs><rect x="0.5" y="0.5" width="15" height="15" rx="2" fill="url(#hsg)" stroke="#bdbdbd"/><path d="M3.5 10A4.5 4.5 0 1 1 12.5 10" fill="none" stroke="#c4c4c4"/><circle cx="8" cy="7" r="0.9" fill="#bbb"/><path d="M1 12.5h14" stroke="#b4b4b4"/><rect x="1" y="13" width="14" height="2" fill="#e8e8e8"/></svg>
<div class="t" style="left:24px;top:216px;color:#3a3a3a">NTFS(D)</div>
<svg class="a" style="left:3.5px;top:233px" width="16" height="16" viewBox="0 0 16 16"><defs><linearGradient id="hsg" x1="0" y1="0" x2="0" y2="1"><stop offset="0" stop-color="#f0f0f0"/><stop offset="1" stop-color="#d6d6d6"/></linearGradient></defs><rect x="0.5" y="0.5" width="15" height="15" rx="2" fill="url(#hsg)" stroke="#bdbdbd"/><path d="M3.5 10A4.5 4.5 0 1 1 12.5 10" fill="none" stroke="#c4c4c4"/><circle cx="8" cy="7" r="0.9" fill="#bbb"/><path d="M1 12.5h14" stroke="#b4b4b4"/><rect x="1" y="13" width="14" height="2" fill="#e8e8e8"/></svg>
<div class="t" style="left:24px;top:236px;color:#3a3a3a">Том 1,0 KB</div>
<svg class="a" style="left:3px;top:255px" width="16" height="16" viewBox="0 0 16 16"><rect x="0.5" y="0.5" width="15" height="15" rx="1" fill="#1e1e1e"/><rect x="3.5" y="1" width="8" height="5" fill="#e8e8e8"/><rect x="8.5" y="1.5" width="2" height="3.5" fill="#1e1e1e"/><rect x="2.5" y="9" width="11" height="6" fill="#f4f4f4"/></svg>
<div class="t" style="left:24px;top:258px;color:#3a3a3a">Диск Диск…</div>
<svg class="a" style="left:98px;top:173px" width="12" height="11" viewBox="0 0 12 11"><path d="M6 0L12 6H0Z" fill="#3a3a3a"/><rect x="0" y="8" width="12" height="2.5" fill="#3a3a3a"/></svg>
<svg class="a" style="left:98px;top:193px" width="12" height="11" viewBox="0 0 12 11"><path d="M6 0L12 6H0Z" fill="#3a3a3a"/><rect x="0" y="8" width="12" height="2.5" fill="#3a3a3a"/></svg>
<svg class="a" style="left:98px;top:215px" width="12" height="11" viewBox="0 0 12 11"><path d="M6 0L12 6H0Z" fill="#3a3a3a"/><rect x="0" y="8" width="12" height="2.5" fill="#3a3a3a"/></svg>
<svg class="a" style="left:114px;top:238px" width="3" height="11" viewBox="0 0 3 11"><circle cx="1.5" cy="1.5" r="1" fill="#999"/><circle cx="1.5" cy="5.5" r="1" fill="#999"/><circle cx="1.5" cy="9.5" r="1" fill="#999"/></svg>
<div class="a" style="left:1px;top:275px;width:115px;height:1px;background:#bfbfbf"></div>
<svg class="a" style="left:3px;top:278px" width="17" height="16" viewBox="0 0 17 16"><defs><linearGradient id="fsg" x1="0" y1="0" x2="0" y2="1"><stop offset="0" stop-color="#6592cc"/><stop offset="1" stop-color="#3f6eae"/></linearGradient></defs><path d="M0.5 15.5V1.5Q0.5 0.5 1.5 0.5H6.5L8 2H15.5V15.5Z" fill="#f2f4f6" stroke="#c8ccd0"/><rect x="2" y="3" width="14.5" height="12.5" rx="1" fill="url(#fsg)" stroke="#3a64a0" stroke-width="0.6"/><path d="M2.5 4H16" stroke="#9ab8e0" stroke-width="0.8"/></svg>
<div class="t" style="left:24px;top:282px;color:#3a3a3a">Документы</div>
<svg class="a" style="left:3px;top:299px" width="17" height="16" viewBox="0 0 17 16"><defs><linearGradient id="fsg" x1="0" y1="0" x2="0" y2="1"><stop offset="0" stop-color="#6592cc"/><stop offset="1" stop-color="#3f6eae"/></linearGradient></defs><path d="M0.5 15.5V1.5Q0.5 0.5 1.5 0.5H6.5L8 2H15.5V15.5Z" fill="#f2f4f6" stroke="#c8ccd0"/><rect x="2" y="3" width="14.5" height="12.5" rx="1" fill="url(#fsg)" stroke="#3a64a0" stroke-width="0.6"/><path d="M2.5 4H16" stroke="#9ab8e0" stroke-width="0.8"/></svg>
<div class="t" style="left:24px;top:303px;color:#3a3a3a">Музыка</div>
<svg class="a" style="left:3px;top:320px" width="17" height="16" viewBox="0 0 17 16"><defs><linearGradient id="fsg" x1="0" y1="0" x2="0" y2="1"><stop offset="0" stop-color="#6592cc"/><stop offset="1" stop-color="#3f6eae"/></linearGradient></defs><path d="M0.5 15.5V1.5Q0.5 0.5 1.5 0.5H6.5L8 2H15.5V15.5Z" fill="#f2f4f6" stroke="#c8ccd0"/><rect x="2" y="3" width="14.5" height="12.5" rx="1" fill="url(#fsg)" stroke="#3a64a0" stroke-width="0.6"/><path d="M2.5 4H16" stroke="#9ab8e0" stroke-width="0.8"/></svg>
<div class="t" style="left:24px;top:324px;color:#3a3a3a">Изображе…</div>
<svg class="a" style="left:3px;top:342px" width="17" height="16" viewBox="0 0 17 16"><defs><linearGradient id="fsg" x1="0" y1="0" x2="0" y2="1"><stop offset="0" stop-color="#6592cc"/><stop offset="1" stop-color="#3f6eae"/></linearGradient></defs><path d="M0.5 15.5V1.5Q0.5 0.5 1.5 0.5H6.5L8 2H15.5V15.5Z" fill="#f2f4f6" stroke="#c8ccd0"/><rect x="2" y="3" width="14.5" height="12.5" rx="1" fill="url(#fsg)" stroke="#3a64a0" stroke-width="0.6"/><path d="M2.5 4H16" stroke="#9ab8e0" stroke-width="0.8"/></svg>
<div class="t" style="left:24px;top:346px;color:#3a3a3a">Видео</div>
<svg class="a" style="left:3px;top:362px" width="17" height="16" viewBox="0 0 17 16"><defs><linearGradient id="fsg" x1="0" y1="0" x2="0" y2="1"><stop offset="0" stop-color="#6592cc"/><stop offset="1" stop-color="#3f6eae"/></linearGradient></defs><path d="M0.5 15.5V1.5Q0.5 0.5 1.5 0.5H6.5L8 2H15.5V15.5Z" fill="#f2f4f6" stroke="#c8ccd0"/><rect x="2" y="3" width="14.5" height="12.5" rx="1" fill="url(#fsg)" stroke="#3a64a0" stroke-width="0.6"/><path d="M2.5 4H16" stroke="#9ab8e0" stroke-width="0.8"/></svg>
<div class="t" style="left:24px;top:366px;color:#3a3a3a">Загрузки</div>
<div class="a" style="left:117px;top:64px;width:487px;height:357px;background:#fff"></div>
<svg class="a" style="left:141px;top:72px" width="50" height="32" viewBox="0 0 50 32"><defs><linearGradient id="bfg" x1="0" y1="0" x2="0" y2="1"><stop offset="0" stop-color="#6a96cf"/><stop offset="1" stop-color="#4070b0"/></linearGradient></defs><path d="M0.5 31.5V2Q0.5 0.5 2 0.5H16L18 4H50V31.5Z" fill="#f4f6f8" stroke="#c6c9cc"/><rect x="3.5" y="6.5" width="47" height="25" rx="1.5" fill="url(#bfg)" stroke="#3a64a0" stroke-width="0.8"/><path d="M4 8H50" stroke="#a0bee4"/></svg>
<div class="t" style="left:142px;top:109px;color:#3a3a3a">Видео</div>
<svg class="a" style="left:141px;top:144px" width="50" height="32" viewBox="0 0 50 32"><defs><linearGradient id="bfg" x1="0" y1="0" x2="0" y2="1"><stop offset="0" stop-color="#6a96cf"/><stop offset="1" stop-color="#4070b0"/></linearGradient></defs><path d="M0.5 31.5V2Q0.5 0.5 2 0.5H16L18 4H50V31.5Z" fill="#f4f6f8" stroke="#c6c9cc"/><rect x="3.5" y="6.5" width="47" height="25" rx="1.5" fill="url(#bfg)" stroke="#3a64a0" stroke-width="0.8"/><path d="M4 8H50" stroke="#a0bee4"/></svg>
<div class="t" style="left:136px;top:180px;color:#3a3a3a">Рабочий</div>
<div class="t" style="left:146px;top:193px;color:#3a3a3a">стол</div>
<div class="a" style="left:0px;top:421px;width:604px;height:14px;background:#dadada;border-top:1px solid #d0d0d0"></div>
<div class="s" style="left:2.5px;top:423px;font-size:9.2px;line-height:9.2px;color:#333;transform:scaleX(0.862);transform-origin:0 0">"2014-02-09-213326_1280x1024_scrot.png" (617,2 КиБ) изображение PNG</div>
<div class="s" style="left:428.5px;top:423px;font-size:9.2px;line-height:9.2px;color:#333;transform:scaleX(0.845);transform-origin:0 0">Свободное место: 39,0 ГиБ (Всего: 41,3 ГиБ)</div>
<svg class="a" style="left:595px;top:422px" width="9" height="12" viewBox="0 0 9 12"><path d="M9 1V12H0Z" fill="#a8a8a8"/></svg>
<div class="bd" style="border-color:#9a9a9a;border-top-color:#e6eaee"></div>
</div>
<div class="w" id="disks" style="left:355px;top:60px;width:606px;height:475px;background:#dcdcdc">
<div class="a" style="left:0;top:0;width:606px;height:40px;background:linear-gradient(#f2f2f2,#e4e4e4 50%,#dedede)"></div>
<svg class="a" style="left:5px;top:3px" width="14" height="12" viewBox="0 0 14 12"><defs><linearGradient id="wig2" x1="0" y1="0" x2="0" y2="1"><stop offset="0" stop-color="#f6f6f6"/><stop offset="1" stop-color="#cfcfcf"/></linearGradient></defs><rect x="0.5" y="0.5" width="13" height="11" rx="1.5" fill="url(#wig2)" stroke="#7c8690"/><rect x="1" y="1" width="12" height="2.5" fill="#3e6eb0"/><path d="M1 11.5H13" stroke="#5a5a5a"/></svg>
<div class="t b" style="left:268px;top:4px;font-size:12.2px;color:#a4a4a4">Диски</div>
<div class="a" style="left:558px;top:8px;width:7px;height:2px;background:#b6b6b6"></div>
<div class="a" style="left:575px;top:8px;width:6px;height:2px;background:#b6b6b6"></div><div class="a" style="left:577px;top:6px;width:2px;height:6px;background:#b6b6b6"></div>
<svg class="a" style="left:591px;top:5px" width="8" height="8"><path d="M1.3 1.3L6.7 6.7M6.7 1.3L1.3 6.7" stroke="#b6b6b6" stroke-width="1.7"/></svg>
<div class="t" style="left:5px;top:23px;font-size:11.8px;line-height:11.8px;color:#3a3a3a">Диски</div>
<div class="a" style="left:10px;top:45px;width:200px;height:397px;background:#fff;border:1px solid #bcbcbc"></div>
<div class="a" style="left:11px;top:46px;width:200px;height:17px;background:linear-gradient(#f6f6f6,#ececec);border-bottom:1px solid #d0d0d0"></div>
<div class="s" style="left:13px;top:49px;font-size:9.8px;line-height:9.8px;color:#444">Диски</div>
<div class="a" style="left:11px;top:63px;width:200px;height:29px;background:#a4b7ce"></div>
<svg class="a" style="left:24px;top:67px" width="20" height="21" viewBox="0 0 20 21"><defs><linearGradient id="hg" x1="0" y1="0" x2="0" y2="1"><stop offset="0" stop-color="#f8f8f8"/><stop offset="1" stop-color="#dedede"/></linearGradient></defs><rect x="0.5" y="0.5" width="19" height="20" rx="2" fill="url(#hg)" stroke="#aeaeae"/><path d="M4 10A6 6 0 0 1 16 10" fill="none" stroke="#9a9a9a" stroke-width="0.8"/><path d="M8 11L10 13 12 11" fill="none" stroke="#aaa" stroke-width="0.8"/><g fill="#888"><rect x="2" y="2" width="1.5" height="1.5"/><rect x="16.5" y="2" width="1.5" height="1.5"/><rect x="2" y="13" width="1.5" height="1.5"/><rect x="16.5" y="13" width="1.5" height="1.5"/></g><path d="M1 16.5H19" stroke="#bdbdbd"/><rect x="1.5" y="17" width="17" height="3" fill="#f0f0f2"/><rect x="14" y="17" width="4" height="2.5" fill="#7cc8a0"/></svg>
<div class="t b" style="left:48px;top:66px;font-size:11.6px;color:#f4f6fa">Ж</div>
<div class="s" style="left:48px;top:79px;font-size:9.8px;line-height:9.8px;color:#eef2f8">ST</div>
<svg class="a" style="left:24px;top:96px" width="20" height="21" viewBox="0 0 20 21"><defs><linearGradient id="hg" x1="0" y1="0" x2="0" y2="1"><stop offset="0" stop-color="#f8f8f8"/><stop offset="1" stop-color="#dedede"/></linearGradient></defs><rect x="0.5" y="0.5" width="19" height="20" rx="2" fill="url(#hg)" stroke="#aeaeae"/><path d="M4 10A6 6 0 0 1 16 10" fill="none" stroke="#9a9a9a" stroke-width="0.8"/><path d="M8 11L10 13 12 11" fill="none" stroke="#aaa" stroke-width="0.8"/><g fill="#888"><rect x="2" y="2" width="1.5" height="1.5"/><rect x="16.5" y="2" width="1.5" height="1.5"/><rect x="2" y="13" width="1.5" height="1.5"/><rect x="16.5" y="13" width="1.5" height="1.5"/></g><path d="M1 16.5H19" stroke="#bdbdbd"/><rect x="1.5" y="17" width="17" height="3" fill="#f0f0f2"/><rect x="14" y="17" width="4" height="2.5" fill="#7cc8a0"/></svg>
<div class="t b" style="left:48px;top:95px;font-size:11.6px;color:#2e2e2e">Ж</div>
<div class="s" style="left:48px;top:108px;font-size:9.8px;line-height:9.8px;color:#7a7a7a">SA</div>
<svg class="a" style="left:24px;top:124px" width="20" height="21" viewBox="0 0 20 21"><defs><linearGradient id="hg" x1="0" y1="0" x2="0" y2="1"><stop offset="0" stop-color="#f8f8f8"/><stop offset="1" stop-color="#dedede"/></linearGradient></defs><rect x="0.5" y="0.5" width="19" height="20" rx="2" fill="url(#hg)" stroke="#aeaeae"/><path d="M4 10A6 6 0 0 1 16 10" fill="none" stroke="#9a9a9a" stroke-width="0.8"/><path d="M8 11L10 13 12 11" fill="none" stroke="#aaa" stroke-width="0.8"/><g fill="#888"><rect x="2" y="2" width="1.5" height="1.5"/><rect x="16.5" y="2" width="1.5" height="1.5"/><rect x="2" y="13" width="1.5" height="1.5"/><rect x="16.5" y="13" width="1.5" height="1.5"/></g><path d="M1 16.5H19" stroke="#bdbdbd"/><rect x="1.5" y="17" width="17" height="3" fill="#f0f0f2"/><rect x="14" y="17" width="4" height="2.5" fill="#7cc8a0"/></svg>
<div class="t b" style="left:48px;top:123px;font-size:11.6px;color:#2e2e2e">Ус</div>
<div class="s" style="left:48px;top:136px;font-size:9.8px;line-height:9.8px;color:#7a7a7a">Fl</div>
<svg class="a" style="left:23px;top:153px" width="20" height="21" viewBox="0 0 20 21"><defs><linearGradient id="cdg" x1="0" y1="0" x2="1" y2="1"><stop offset="0" stop-color="#555"/><stop offset="0.5" stop-color="#1a1a1a"/><stop offset="1" stop-color="#333"/></linearGradient></defs><rect x="0.5" y="0.5" width="19" height="20" rx="2.5" fill="url(#cdg)" stroke="#222"/><circle cx="11" cy="10" r="6.6" fill="#e4e4e4"/><path d="M11 3.4A6.6 6.6 0 0 0 5.6 6.2L11 10Z" fill="#7ad07a"/><path d="M17 12.8A6.6 6.6 0 0 1 13 16.3L11 10Z" fill="#60c060"/><path d="M13 16.3A6.6 6.6 0 0 1 9 16.3L11 10Z" fill="#d8e070"/><circle cx="11" cy="10" r="2.6" fill="#1e1e1e"/><circle cx="11" cy="10" r="1" fill="#555"/></svg>
<div class="t b" style="left:48px;top:152px;font-size:11.6px;color:#2e2e2e">Ус</div>
<div class="s" style="left:48px;top:165px;font-size:9.8px;line-height:9.8px;color:#7a7a7a">_N</div>
<svg class="a" style="left:24px;top:181px" width="20" height="21" viewBox="0 0 20 21"><defs><linearGradient id="hg" x1="0" y1="0" x2="0" y2="1"><stop offset="0" stop-color="#f8f8f8"/><stop offset="1" stop-color="#dedede"/></linearGradient></defs><rect x="0.5" y="0.5" width="19" height="20" rx="2" fill="url(#hg)" stroke="#aeaeae"/><path d="M4 10A6 6 0 0 1 16 10" fill="none" stroke="#9a9a9a" stroke-width="0.8"/><path d="M8 11L10 13 12 11" fill="none" stroke="#aaa" stroke-width="0.8"/><g fill="#888"><rect x="2" y="2" width="1.5" height="1.5"/><rect x="16.5" y="2" width="1.5" height="1.5"/><rect x="2" y="13" width="1.5" height="1.5"/><rect x="16.5" y="13" width="1.5" height="1.5"/></g><path d="M1 16.5H19" stroke="#bdbdbd"/><rect x="1.5" y="17" width="17" height="3" fill="#f0f0f2"/><rect x="14" y="17" width="4" height="2.5" fill="#7cc8a0"/></svg>
<div class="t b" style="left:48px;top:180px;font-size:11.6px;color:#2e2e2e">Д</div>
<div class="s" style="left:48px;top:193px;font-size:9.8px;line-height:9.8px;color:#7a7a7a">US</div>
<div class="a" style="left:16.5px;top:451.5px;width:9px;height:1.6px;background:#222"></div><div class="a" style="left:20.2px;top:447.8px;width:1.6px;height:9px;background:#222"></div>
<div class="a" style="left:0;top:472px;width:606px;height:1px;background:#8c8c8c"></div><div class="a" style="left:0;top:473px;width:606px;height:1px;background:#f4f4f4"></div>
<div class="a" style="left:550px;top:247px;width:2px;height:2px;background:#444;border-radius:1px"></div>
<div class="btn" style="left:569px;top:54px;width:26px;height:19px;border-radius:3px"></div>
<svg class="a" style="left:575px;top:57px" width="14" height="13" viewBox="0 0 14 13"><g fill="#333"><circle cx="9" cy="5" r="3.2"/><path d="M9 0.5v2M9 7.5v2M4.5 5h2M11.5 5h2M5.8 1.8l1.4 1.4M10.8 6.8l1.4 1.4M5.8 8.2l1.4-1.4M10.8 3.2l1.4-1.4" stroke="#333" stroke-width="1.6"/></g><circle cx="9" cy="5" r="1.3" fill="#eee"/><circle cx="3.6" cy="10" r="2" fill="none" stroke="#333" stroke-width="1.3"/></svg>
<div class="a" style="left:520px;top:188px;width:76px;height:46px;background:#e2e2e2;border:1px solid #c8c8c8;border-bottom:none"></div>
<div class="a" style="left:520px;top:233px;width:76px;height:45px;background:#e2e2e2;border:1px solid #c8c8c8;border-top:1px solid #cfcfcf"></div>
<div class="t" style="left:573px;top:266px;font-size:11px;color:#333">★</div>
<svg class="a" style="left:585px;top:267px" width="8" height="9"><path d="M0 0L8 4.5 0 9Z" fill="#444"/></svg>
<div class="a" style="left:520px;top:277px;width:76px;height:24px;background:#dcdcdc;border:1px solid #8a8a8a;border-radius:0 0 2px 0"></div>
<div class="bd" style="border-color:#9a9a9a;border-top-color:#dde0e8"></div>
</div>
<div class="w" id="smart" style="left:412px;top:74px;width:494px;height:483px;background:#dcdcdc">
<div class="a" style="left:0;top:0;width:494px;height:22px;background:linear-gradient(#fbfbfb,#e4e4e4 70%,#dcdcdc)"></div>
<svg class="a" style="left:5px;top:4px" width="14" height="12" viewBox="0 0 14 12"><defs><linearGradient id="wig" x1="0" y1="0" x2="0" y2="1"><stop offset="0" stop-color="#f6f6f6"/><stop offset="1" stop-color="#cfcfcf"/></linearGradient></defs><rect x="0.5" y="0.5" width="13" height="11" rx="1.5" fill="url(#wig)" stroke="#7c8690"/><rect x="1" y="1" width="12" height="2.5" fill="#3e6eb0"/><path d="M1 11.5H13" stroke="#5a5a5a"/></svg>
<div class="t b" style="left:185px;top:5px;font-size:11.6px;color:#555">Данные SMART</div>
<div class="a" style="left:446px;top:9px;width:6px;height:2px;background:#5c5c5c"></div>
<div class="a" style="left:463px;top:9px;width:6px;height:2px;background:#5c5c5c"></div><div class="a" style="left:465px;top:7px;width:2px;height:6px;background:#5c5c5c"></div>
<svg class="a" style="left:479px;top:6px" width="8" height="8"><path d="M1.3 1.3L6.7 6.7M6.7 1.3L1.3 6.7" stroke="#5c5c5c" stroke-width="1.7"/></svg>
<div class="t r" style="right:327px;top:32px;">Обновлено</div>
<div class="t" style="left:176px;top:32px;">3 минуты и 15 секунд назад</div>
<div class="t r" style="right:327px;top:52px;">Температура</div>
<div class="t" style="left:176px;top:52px;">43° C / 109° F</div>
<div class="t r" style="right:327px;top:73px;">Задействован</div>
<div class="t" style="left:176px;top:73px;">3 месяца и 23 дня</div>
<div class="t r" style="right:327px;top:93px;">Результаты самодиагностики</div>
<div class="t" style="left:176px;top:93px;">Последняя самодиагностика завершена без ошибок</div>
<div class="t r" style="right:327px;top:113px;">Внутренняя оценка:</div>
<div class="t" style="left:176px;top:113px;">Пороговое значение не превышено</div>
<div class="t r" style="right:327px;top:134px;">Общая оценка</div>
<div class="t" style="left:176px;top:134px;">Диск исправен</div>
<div class="t b" style="left:11px;top:156px;font-size:11.1px;color:#3c3c3c">Атрибуты SMART</div>
<div class="a" style="left:29px;top:181px;width:453px;height:151px;background:#fff;border:1px solid #b8b8b8;overflow:hidden">
<div class="a" style="left:0;top:0;width:446px;height:21px;background:linear-gradient(#ececec,#e0e0e0);border-bottom:1px solid #c8c8c8"></div>
<div class="a" style="left:23px;top:2px;width:1px;height:18px;background:#cdcdcd"></div>
<div class="a" style="left:297px;top:2px;width:1px;height:18px;background:#cdcdcd"></div>
<div class="a" style="left:395px;top:2px;width:1px;height:18px;background:#cdcdcd"></div>
<div class="t" style="left:5px;top:5px">ID</div>
<div class="t" style="left:29px;top:5px">Атрибут</div>
<div class="t" style="left:302px;top:5px">Значение</div>
<div class="t" style="left:401px;top:5px">Оценка</div>
<div class="t" style="left:3px;top:21px">9</div>
<div class="t" style="left:27px;top:21px">Отработанное время</div>
<div class="t" style="left:300px;top:21px">3 месяца и 23 дня</div>
<div class="t" style="left:399px;top:21px">OK</div>
<div class="t" style="left:3px;top:38px">10</div>
<div class="t" style="left:27px;top:38px">Попытки повторной раскрутки</div>
<div class="t" style="left:300px;top:38px">0</div>
<div class="t" style="left:399px;top:38px">OK</div>
<div class="t" style="left:3px;top:56px">12</div>
<div class="t" style="left:27px;top:56px">Цикл «включение/выключение»</div>
<div class="t" style="left:300px;top:56px">7101</div>
<div class="t" style="left:399px;top:56px">OK</div>
<div class="t" style="left:3px;top:73px">187</div>
<div class="t" style="left:27px;top:73px">Неисправимые ошибки</div>
<div class="t" style="left:300px;top:73px">383 сектора</div>
<div class="t" style="left:399px;top:73px">OK</div>
<div class="t" style="left:3px;top:90px">189</div>
<div class="t" style="left:27px;top:90px">Вылеты пишущей головки</div>
<div class="t" style="left:300px;top:90px">0</div>
<div class="t" style="left:399px;top:90px">OK</div>
<div class="t" style="left:3px;top:108px">190</div>
<div class="t" style="left:27px;top:108px">Температура воздушного потока</div>
<div class="t" style="left:300px;top:108px">43° C / 109° F</div>
<div class="t" style="left:399px;top:108px">OK</div>
<div class="t" style="left:3px;top:125px">194</div>
<div class="t" style="left:27px;top:125px">Температура</div>
<div class="t" style="left:300px;top:125px">43° C / 109° F</div>
<div class="t" style="left:399px;top:125px">OK</div>
<div class="t" style="left:3px;top:142px">195</div>
<div class="t" style="left:27px;top:142px">Аппаратное исправление</div>
<div class="t" style="left:300px;top:142px">12453620</div>
<div class="t" style="left:399px;top:142px">OK</div>
<div class="a" style="left:445px;top:21px;width:7px;height:128px;background:#f0f0f0"></div>
<div class="a" style="left:446px;top:43px;width:5px;height:60px;border-radius:3px;background:#a4a4a4"></div>
</div>
<div class="t r" style="right:413px;top:341px;">Значение</div>
<div class="t" style="left:90px;top:341px;letter-spacing:-0.45px">151621048</div>
<div class="s" style="left:147px;top:343px;">(нормализованное: 99; пороговое: 6; наихудшее: 82)</div>
<div class="t r" style="right:413px;top:361px;">Тип</div>
<div class="t" style="left:90px;top:361px;letter-spacing:-0.03px">Ошибка означает, что диск откажет в течение 24 часов</div>
<div class="s" style="left:382px;top:363px;">(Pre-Fail)</div>
<div class="t" style="left:90px;top:374px;">Данные собираются постоянно</div>
<div class="s" style="left:261px;top:376px;">(Online)</div>
<div class="t r" style="right:413px;top:394px;">Описание</div>
<div class="t" style="left:90px;top:394px;">Количество ошибок чтения данных с диска. Отличное от нуля значение</div>
<div class="t" style="left:90px;top:407px;">показывает, что есть проблемы либо с поверхностью диска, либо с</div>
<div class="t" style="left:90px;top:419px;">головками чтения/записи</div>
<div class="btn" style="left:16px;top:445px;width:174px;height:22px"></div>
<div class="t" style="left:23px;top:452px;">Запустить самодиагностику…</div>
<div class="btn" style="left:196px;top:445px;width:83px;height:22px"></div>
<svg class="a" style="left:205px;top:450px" width="13" height="14"><path d="M9.5 3.5A4.6 4.6 0 1 0 11 8" fill="none" stroke="#505050" stroke-width="1.6"/><path d="M7 1L11 3.6 7.6 6.4Z" fill="#505050"/></svg>
<div class="t" style="left:219px;top:452px;">Обновить</div>
<div class="btn" style="left:395px;top:445px;width:83px;height:22px"></div>
<svg class="a" style="left:409px;top:452px" width="10" height="10"><path d="M1 1L9 9M9 1L1 9" stroke="#505050" stroke-width="1.7"/></svg>
<div class="t" style="left:421px;top:452px;">Закрыть</div>
<div class="bd" style="border-color:#6a6a6a"></div>
</div>
</body></html>
